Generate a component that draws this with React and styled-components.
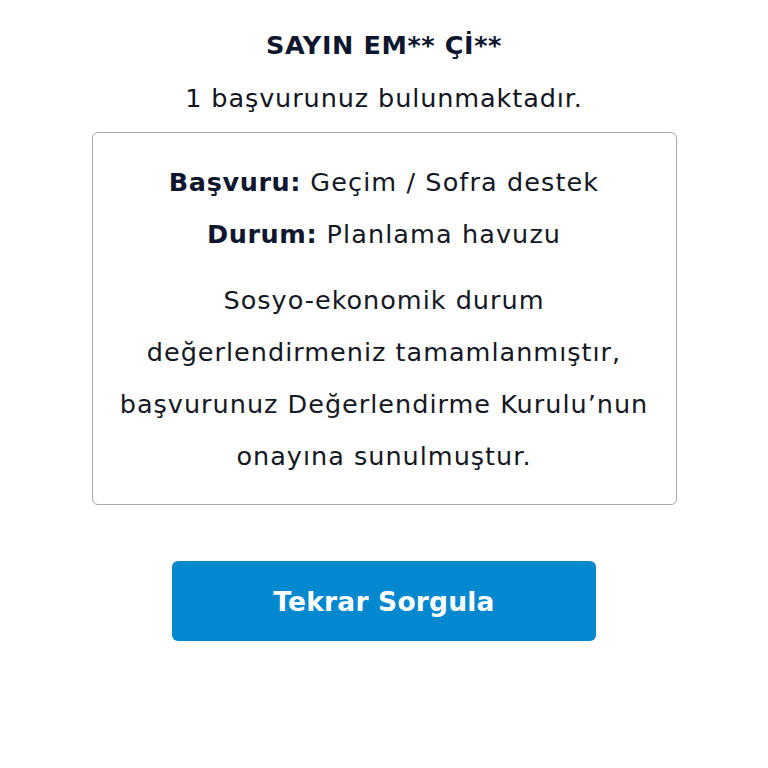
import React from "react";
import styled, { createGlobalStyle } from "styled-components";

const Global = createGlobalStyle`
  html, body { margin: 0; padding: 0; background: #ffffff; }
  body { font-family: "DejaVu Sans", "Noto Sans", sans-serif; color: #0f1629; }
`;

const Page = styled.main`
  display: flex;
  flex-direction: column;
  align-items: center;
  padding-top: 19px;
`;

const Title = styled.h1`
  margin: 0;
  font-size: 25.5px;
  line-height: 52px;
  font-weight: 700;
  letter-spacing: 0.6px;
  color: #0f1730;
`;

const Subtitle = styled.p`
  margin: 1px 0 8px;
  font-size: 25.5px;
  line-height: 52px;
  font-weight: 400;
  letter-spacing: 0.9px;
  color: #111522;
`;

const Card = styled.section`
  box-sizing: border-box;
  width: 585px;
  padding: 23px 4px 22px;
  border: 1.5px solid #a9a9ab;
  border-radius: 6px;
  display: flex;
  flex-direction: column;
  align-items: center;
  text-align: center;
`;

const InfoLine = styled.div`
  font-size: 25.5px;
  line-height: 52px;
  letter-spacing: 1.1px;
  color: #141824;
  white-space: nowrap;
  b { font-weight: 700; color: #0f1730; letter-spacing: 0.6px; }
`;

const Paragraph = styled.p`
  margin: 14px 0 0;
  font-size: 25.5px;
  line-height: 52px;
  letter-spacing: 1px;
  color: #141824;
  white-space: nowrap;
`;

const Button = styled.button`
  margin-top: 56px;
  width: 424px;
  height: 80px;
  border: none;
  border-radius: 6px;
  background: #0288cf;
  color: #ffffff;
  font-family: "DejaVu Sans", "Noto Sans", sans-serif;
  font-size: 26.5px;
  font-weight: 700;
  letter-spacing: 0.2px;
  cursor: pointer;
`;

export default function App() {
  return (
    <>
      <Global />
      <Page>
        <Title>SAYIN EM** Çİ**</Title>
        <Subtitle>1 başvurunuz bulunmaktadır.</Subtitle>
        <Card>
          <InfoLine><b>Başvuru:</b> Geçim / Sofra destek</InfoLine>
          <InfoLine><b>Durum:</b> Planlama havuzu</InfoLine>
          <Paragraph>
            Sosyo-ekonomik durum<br />
            değerlendirmeniz tamamlanmıştır,<br />
            başvurunuz Değerlendirme Kurulu’nun<br />
            onayına sunulmuştur.
          </Paragraph>
        </Card>
        <Button>Tekrar Sorgula</Button>
      </Page>
    </>
  );
}
